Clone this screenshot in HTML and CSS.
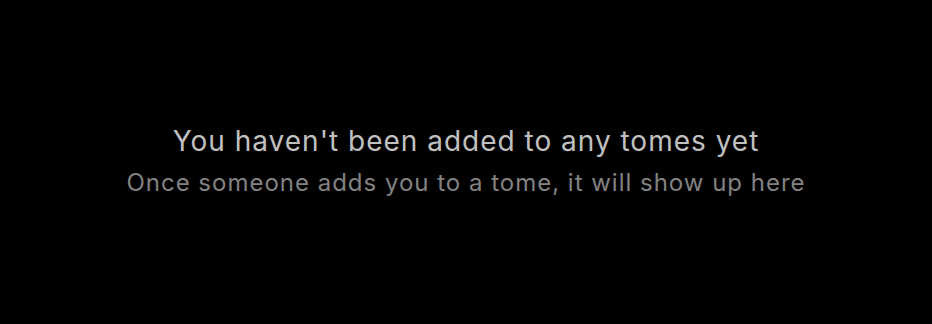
FILE: index.html
```html
<!DOCTYPE html>
<html lang="en">
<head>
  <meta charset="UTF-8">
  <meta name="viewport" content="width=device-width, initial-scale=1.0">
  <title>Tomes</title>
  <link rel="stylesheet" href="styles.css">
</head>
<body>
  <div id="container">
    <section class="empty-state">
      <h2 class="empty-title">You haven't been added to any tomes yet</h2>
      <p class="empty-text">Once someone adds you to a tome, it will show up here</p>
    </section>
  </div>
</body>
</html>
```

FILE: styles.css
```css
body {
  font-family: Inter, "Noto Sans", Arial, sans-serif;
  margin: 0;
  padding: 0;
  background-color: #000;
}

#container {
  height: 324px;
  display: flex;
  align-items: center;
  justify-content: center;
}

.empty-state {
  text-align: center;
  letter-spacing: 0.062em;
}

.empty-title {
  margin: 0 0 2px;
  font-size: 28px;
  font-weight: 400;
  line-height: 40px;
  color: #c0c0c0;
}

.empty-text {
  margin: 0;
  font-size: 24px;
  line-height: 40px;
  color: #828282;
}
```
